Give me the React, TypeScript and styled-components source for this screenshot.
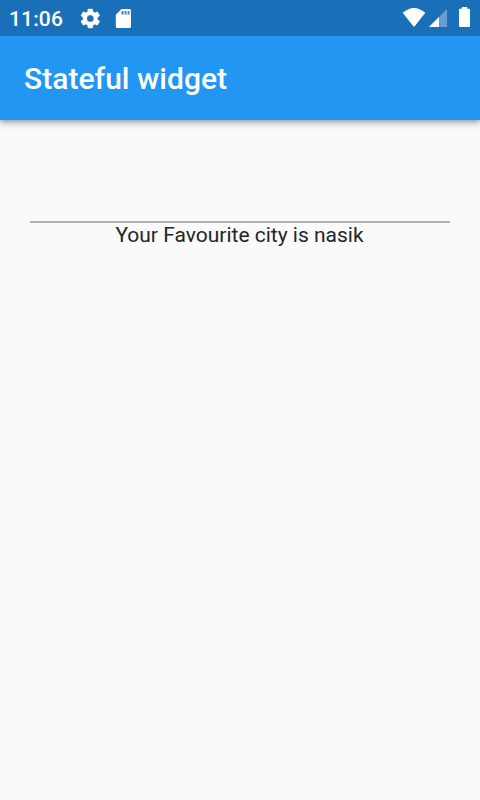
import React from "react";
import styled, { createGlobalStyle } from "styled-components";

const GlobalStyle = createGlobalStyle`
  html, body { margin: 0; background: #fafafa; font-family: Roboto, sans-serif; overflow: hidden; }
`;
const Screen = styled.div`
  width: 480px;
  height: 800px;
  display: flex;
  flex-direction: column;
  background: #fafafa;
`;
const StatusBar = styled.header`
  position: relative;
  z-index: 1;
  height: 36px;
  box-sizing: border-box;
  padding: 0 10px 0 9px;
  display: flex;
  align-items: center;
  background: #1a70b8;
  color: #fff;
`;
const Clock = styled.span`
  width: 69px;
  font-size: 21px;
  letter-spacing: 0.15px;
  font-weight: 500;
  line-height: 36px;
  padding-top: 2px;
  box-sizing: border-box;
`;
const StatusIcon = styled.svg<{ $gap?: number }>`
  display: block;
  margin-left: ${(p) => p.$gap ?? 0}px;
  fill: #fff;
`;
const Spacer = styled.div`
  flex: 1;
`;
const AppBar = styled.div`
  height: 84px;
  box-sizing: border-box;
  padding: 0 24px;
  display: flex;
  align-items: center;
  background: #2196f3;
  box-shadow: 0 3px 7px rgba(0, 0, 0, 0.3), 0 1px 4px rgba(0, 0, 0, 0.14);
`;
const Title = styled.h1`
  margin: 0;
  color: #fff;
  font-size: 30px;
  letter-spacing: 0.03px;
  font-weight: 500;
`;
const Content = styled.main`
  padding: 30px;
  display: flex;
  flex-direction: column;
`;
const CityInput = styled.input`
  height: 73px;
  box-sizing: border-box;
  border: 0;
  border-bottom: 2px solid #b0b0b0;
  background: transparent;
  outline: 0;
  font: 24px Roboto, sans-serif;
`;
const Message = styled.p`
  margin: 0;
  padding-right: 1px;
  font-size: 21px;
  line-height: 25px;
  text-align: center;
  color: #252525;
`;

export default function App() {
  return (
    <Screen>
      <GlobalStyle />
      <StatusBar>
        <Clock>11:06</Clock>
        <StatusIcon width="24" height="24" viewBox="-.3 -.5 24 24">
          <path
            stroke="#fff"
            strokeWidth=".3"
            d="M19.14 12.94c.04-.3.06-.61.06-.94 0-.32-.02-.64-.07-.94l2.03-1.58a.49.49 0 0 0 .12-.61l-1.92-3.32a.488.488 0 0 0-.59-.22l-2.39.96c-.5-.38-1.03-.7-1.62-.94l-.36-2.54a.484.484 0 0 0-.48-.41h-3.84c-.24 0-.43.17-.47.41l-.36 2.54c-.59.24-1.13.57-1.62.94l-2.39-.96c-.22-.08-.47 0-.59.22L2.74 8.87c-.12.21-.08.47.12.61l2.03 1.58c-.05.3-.09.63-.09.94s.02.64.07.94l-2.03 1.58a.49.49 0 0 0-.12.61l1.92 3.32c.12.22.37.29.59.22l2.39-.96c.5.38 1.03.7 1.62.94l.36 2.54c.05.24.24.41.48.41h3.84c.24 0 .44-.17.47-.41l.36-2.54c.59-.24 1.13-.56 1.62-.94l2.39.96c.22.08.47 0 .59-.22l1.92-3.32c.12-.22.07-.47-.12-.61l-2.01-1.58zM12 15.500A3.500 3.500 0 1 1 12 8.500a3.500 3.500 0 0 1 0 7z"
          />
        </StatusIcon>
        <StatusIcon $gap={13} width="16" height="20" viewBox="0 0 16 20">
          <path
            fillRule="evenodd"
            d="M6.500 1h8q1.500 0 1.500 1.500v16q0 1.500-1.500 1.500H2.300q-1.500 0-1.500-1.500V6.700zM6.500 3v3.500h2V3zM9.500 3v3.500h2V3zM12.500 3v3.500h2V3z"
          />
          <path d="M6.500 3h8v3.500h-8z" opacity=".2" />
        </StatusIcon>
        <Spacer />
        <StatusIcon width="24" height="20" viewBox="0 0 24 20">
          <path d="M.7 4.700Q12-4.700 23.300 4.700L12.700 18.300Q12 19 11.300 18.300Z" />
        </StatusIcon>
        <StatusIcon $gap={2} width="20" height="20" viewBox="0 0 20 20">
          <path d="M19 1v18H1z" opacity=".33" />
          <path d="M11 9v10H1z" />
        </StatusIcon>
        <StatusIcon $gap={11} width="11" height="22" viewBox="0 0 11 22">
          <path d="M3.300 0h4.400q.6 0 .6.600V1.700H10q1 0 1 1V19q0 1-1 1H1q-1 0-1-1V2.700q0-1 1-1h1.700V.6q0-.6.600-.6z" />
        </StatusIcon>
      </StatusBar>
      <AppBar>
        <Title>Stateful widget</Title>
      </AppBar>
      <Content>
        <CityInput aria-label="City" />
        <Message>Your Favourite city is nasik</Message>
      </Content>
    </Screen>
  );
}
